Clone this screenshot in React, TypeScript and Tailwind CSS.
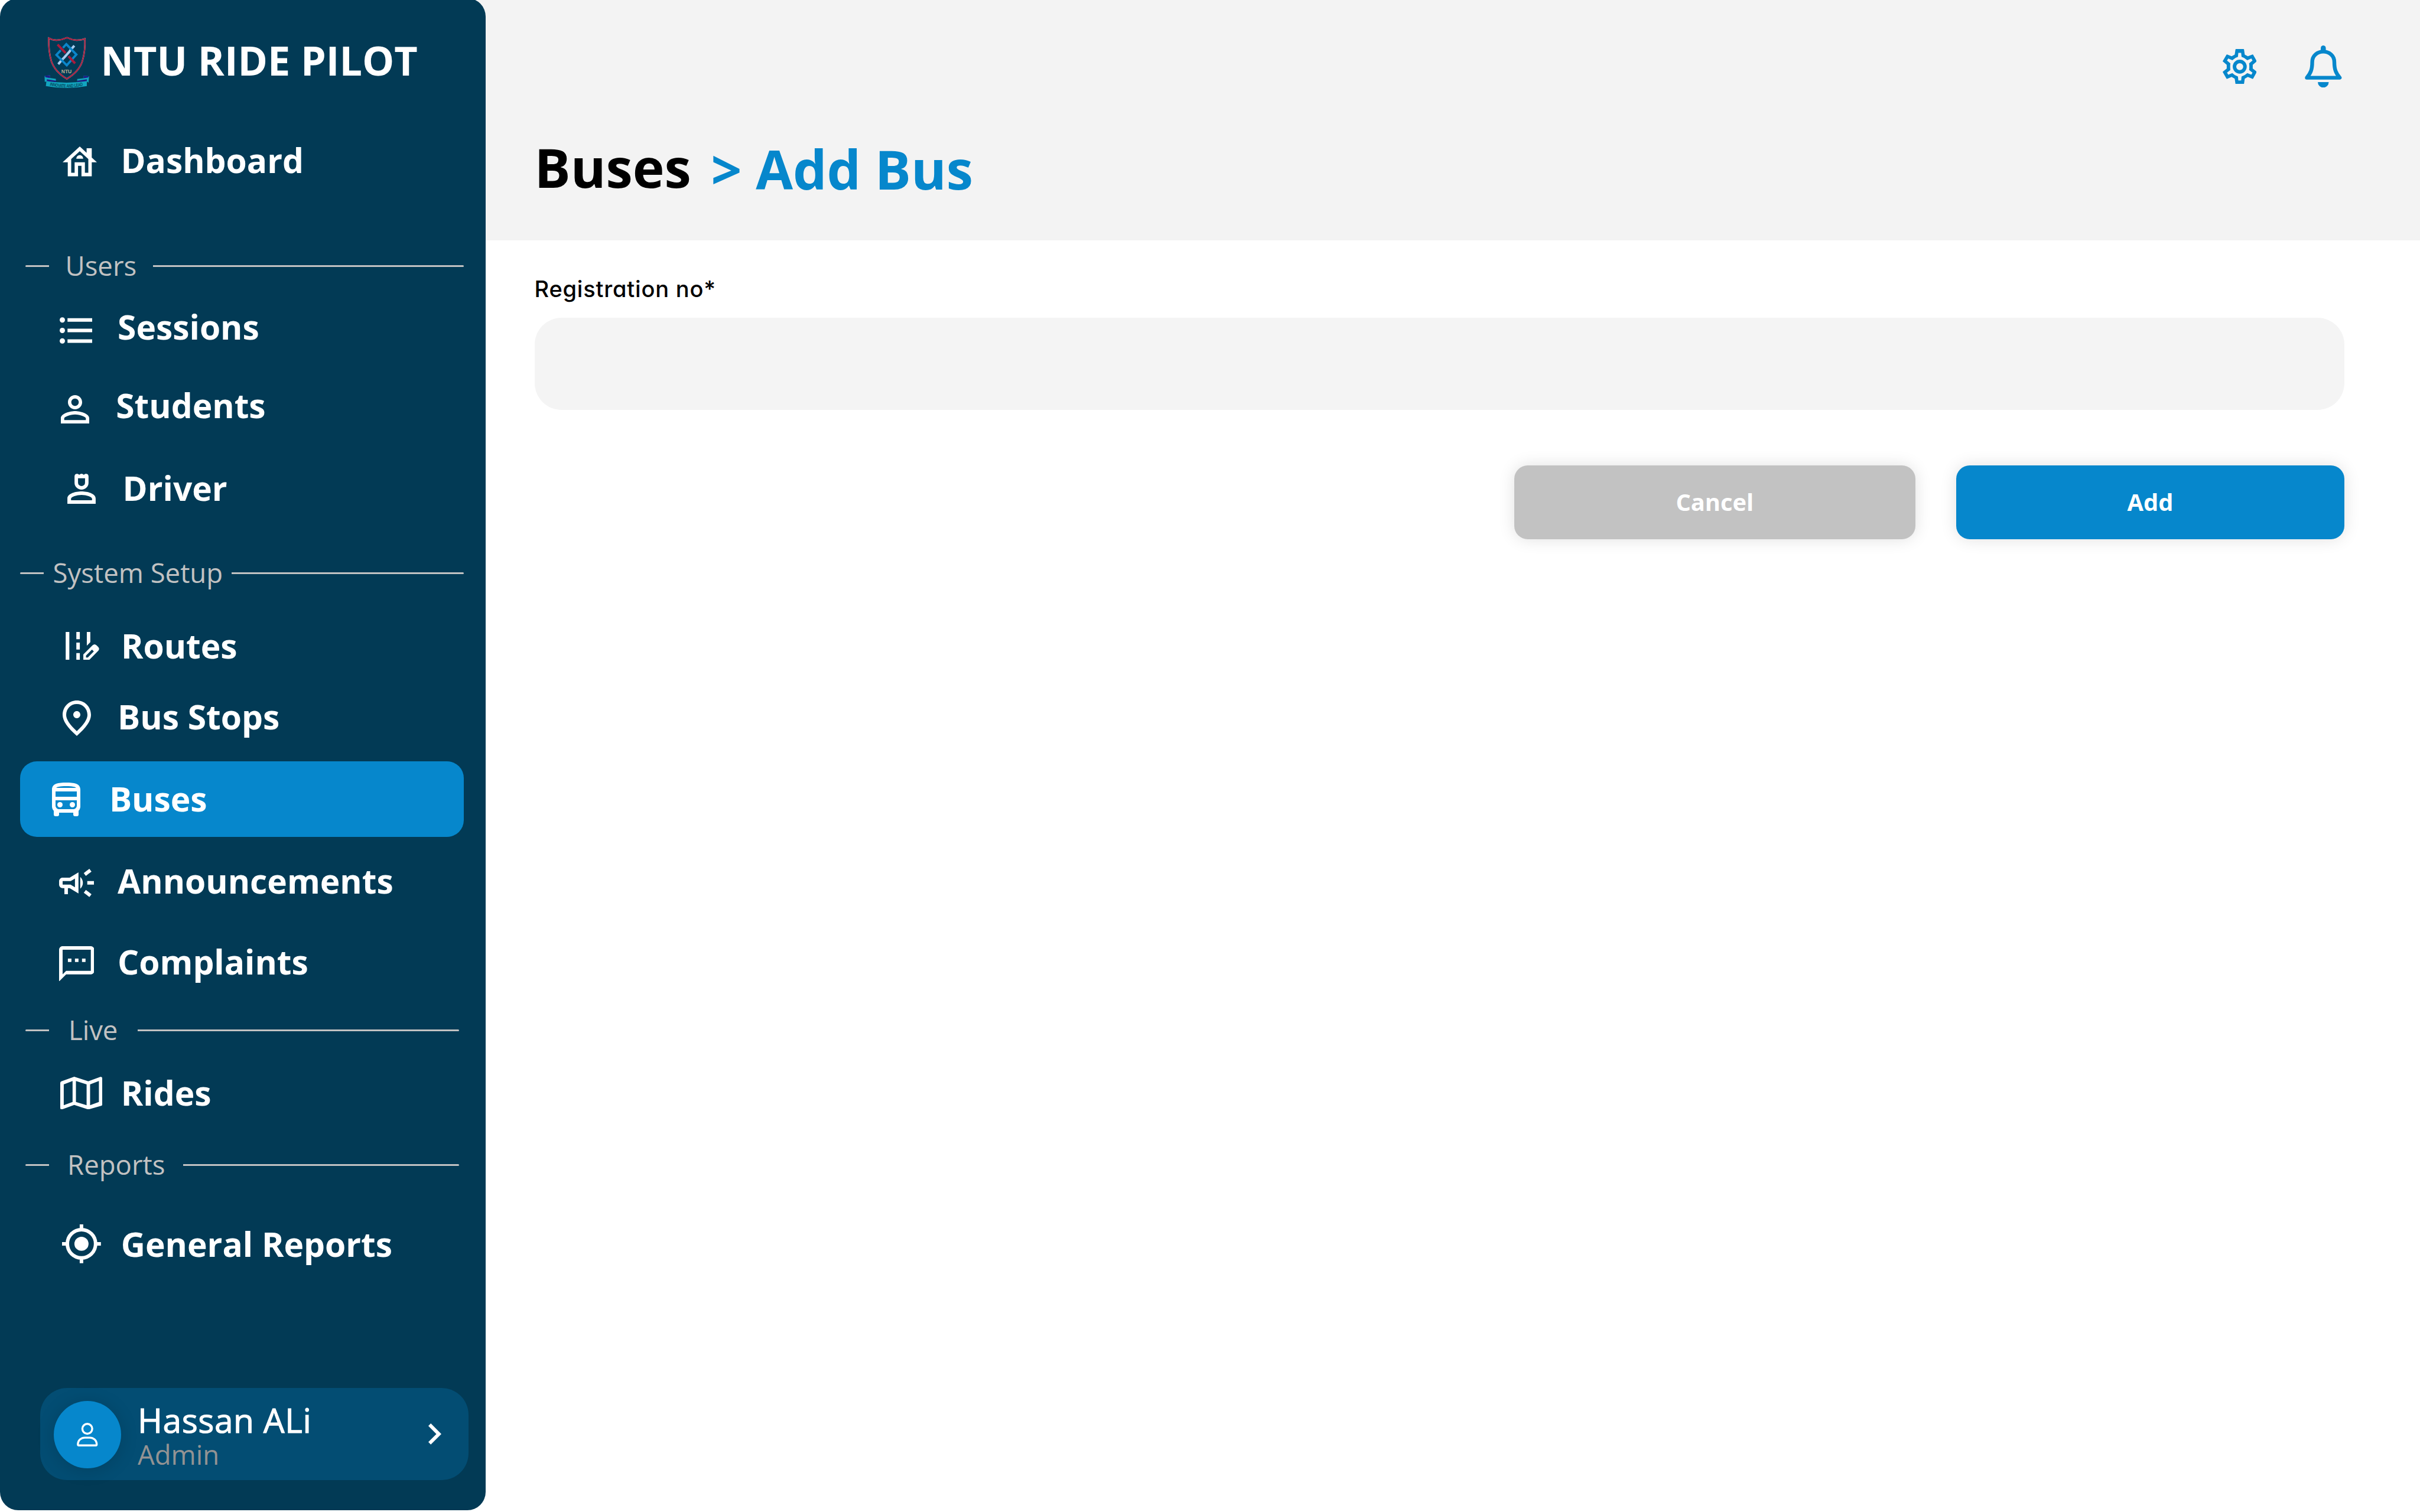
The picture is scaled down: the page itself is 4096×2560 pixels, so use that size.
import type { ReactNode } from "react";

type IconProps = { className: string };

function HouseIcon({ className }: IconProps) {
  return (
    <svg viewBox="2 3 20 17" preserveAspectRatio="none" fill="currentColor" className={className}>
      <path d="M19 9.3V4h-3v2.6L12 3 2 12h3v8h6v-6h2v6h6v-8h3l-3-2.7zM17 18h-2v-6H9v6H7v-7.81l5-4.5 5 4.5V18zM10 10h4c0-1.1-.9-2-2-2s-2 .9-2 2z" />
    </svg>
  );
}

function ListIcon({ className }: IconProps) {
  return (
    <svg viewBox="127 43 233 190" fill="currentColor" className={className}>
      <circle cx="146" cy="63" r="19" />
      <circle cx="146" cy="138" r="19" />
      <circle cx="146" cy="213" r="19" />
      <path d="M183 50h177v26H183zM183 125h177v26H183zM183 201h177v26H183z" />
    </svg>
  );
}

function PersonIcon({ className }: IconProps) {
  return (
    <svg viewBox="4 4 16 16" fill="currentColor" className={className}>
      <path d="M12 5.9c1.16 0 2.1.94 2.1 2.1s-.94 2.1-2.1 2.1S9.9 9.16 9.9 8s.94-2.1 2.1-2.1m0 9c2.97 0 6.1 1.46 6.1 2.1v1.1H5.9V17c0-.64 3.13-2.1 6.1-2.1M12 4C9.79 4 8 5.79 8 8s1.79 4 4 4 4-1.79 4-4-1.79-4-4-4zm0 9c-2.67 0-8 1.34-8 4v3h16v-3c0-2.66-5.33-4-8-4z" />
    </svg>
  );
}

function DriverIcon({ className }: IconProps) {
  return (
    <svg viewBox="181 1163 202 217" fill="currentColor" fillRule="evenodd" className={className}>
      <path d="M232 1182C232 1164 252 1158 266 1171C274 1162 290 1162 298 1171C312 1158 332 1164 332 1182V1227a50 50 0 0 1-100 0ZM257 1196V1227a25 25 0 0 0 50 0V1196Z" />
      <path d="M181 1380V1341C181 1305 240 1290 282 1290S383 1305 383 1341V1380ZM207 1353H357V1341C357 1330 317 1315 282 1315S207 1330 207 1341Z" />
    </svg>
  );
}

function RoadIcon({ className }: IconProps) {
  return (
    <svg viewBox="169 43 239 201" fill="currentColor" fillRule="evenodd" className={className}>
      <path d="M169 43h26v201h-26zM245 43h25v52h-25zM245 119h25v50h-25zM245 194h25v50h-25zM320 43h25v73l-25 25z" />
      <path d="M295 244V203L361 138Q375 125 389 138L401 150Q414 164 402 177L336 244ZM314 226H327L370 182L357 169L314 212Z" />
    </svg>
  );
}

function PinIcon({ className }: IconProps) {
  return (
    <svg viewBox="4 2 16 20" fill="currentColor" className={className}>
      <path d="M12 12c-1.1 0-2-.9-2-2s.9-2 2-2 2 .9 2 2-.9 2-2 2zm6-1.8C18 6.57 15.35 4 12 4s-6 2.57-6 6.2c0 2.34 1.95 5.44 6 9.14 4.05-3.7 6-6.8 6-9.14zM12 2c4.2 0 8 3.22 8 8.2 0 3.32-2.67 7.25-8 11.8-5.33-4.55-8-8.48-8-11.8C4 5.22 7.8 2 12 2z" />
    </svg>
  );
}

function BusIcon({ className }: IconProps) {
  return (
    <svg viewBox="4 2 16 19" fill="currentColor" fillRule="evenodd" className={className}>
      <path d="M4 15.5c0 .95.38 1.81 1 2.44V20a1 1 0 0 0 1 1h1a1 1 0 0 0 1-1v-1h8v1a1 1 0 0 0 1 1h1a1 1 0 0 0 1-1v-2.06c.62-.63 1-1.49 1-2.44V6c0-3.5-3.58-4-8-4s-8 .5-8 4v9.5zM12 4c3.69 0 5.11.46 5.66.99H6.34C6.89 4.46 8.31 4 12 4zM6 7.03h12V10H6zM6 12h12v3c0 1.1-.9 2-2 2H8c-1.1 0-2-.9-2-2z" />
      <circle cx="8.5" cy="14.5" r="1.5" />
      <circle cx="15.5" cy="14.5" r="1.5" />
    </svg>
  );
}

function CampaignIcon({ className }: IconProps) {
  return (
    <svg viewBox="2 4 20 16" fill="currentColor" className={className}>
      <path d="M18 11v2h4v-2h-4zM16 17.61c.96.71 2.21 1.65 3.2 2.39.4-.53.8-1.07 1.2-1.6-.99-.74-2.24-1.68-3.2-2.4-.4.54-.8 1.08-1.2 1.61zM20.4 5.6c-.4-.53-.8-1.07-1.2-1.6-.99.74-2.24 1.68-3.2 2.4.4.53.8 1.07 1.2 1.6.96-.72 2.21-1.65 3.2-2.4zM4 9c-1.1 0-2 .9-2 2v2c0 1.1.9 2 2 2h1v3.4h2V15h1l5 3V6L8 9H4zm5.03 1.71L11 9.53v4.94l-1.97-1.18-.48-.29H4v-2h4.55l.48-.29zM15.5 12c0-1.33-.58-2.53-1.5-3.35v6.69c.92-.81 1.5-2.01 1.5-3.34z" />
    </svg>
  );
}

function ChatIcon({ className }: IconProps) {
  return (
    <svg viewBox="2 2 20 20" fill="currentColor" className={className}>
      <path d="M20 2H4c-1.1 0-2 .9-2 2v18l4-4h14c1.1 0 2-.9 2-2V4c0-1.1-.9-2-2-2zm0 14H6l-2 2V4h16v12zM7 9h2v2H7zm8 0h2v2h-2zm-4 0h2v2h-2z" />
    </svg>
  );
}

function MapIcon({ className }: IconProps) {
  return (
    <svg viewBox="0 0 100 78" fill="currentColor" fillRule="evenodd" className={className}>
      <path d="M3 11L33.3 0L66.7 10.7L95.5 .3Q100 -.5 100 4V66Q100 68.5 97.5 69.3L66.7 78L33.3 67L4.5 77.7Q0 78.500 0 74V15Q0 12 3 11ZM8.300 18.200V67.800L29.300 60.200V10ZM37.300 10V60.200L62.700 67.800V18.200ZM71 18.200V67.800L92 60.200V10Z" />
    </svg>
  );
}

function TargetIcon({ className }: IconProps) {
  return (
    <svg viewBox="0 0 22 22" fill="currentColor" className={className}>
      <circle cx="11" cy="11" r="8" fill="none" stroke="currentColor" strokeWidth="2" />
      <circle cx="11" cy="11" r="4" />
      <path d="M10 0h2v3h-2zM10 19h2v3h-2zM0 10h3v2H0zM19 10h3v2h-3z" />
    </svg>
  );
}

function GearIcon({ className }: IconProps) {
  return (
    <svg viewBox="268 168 244 252" fill="currentColor" fillRule="evenodd" className={className}>
      <path d="M363 168H417Q420 168 420.500 171L426 208L448 220L481 207Q484 206 486 209L511 253Q513 256 510 258L483 281V307L510 329Q513 331 511 334L486 379Q484 382 481 381L448 367L426 380L420.500 417Q420 420 417 420H363Q360 420 359.500 417L354 380L332 367L300 381Q297 382 295 379L269 334Q267 331 270 329L297 307V281L270 258Q267 256 269 253L295 209Q297 206 300 207L332 220L354 208L359.500 171Q360 168 363 168ZM380 195L377 224Q355 230 337 248L308 236L299 250L323 270Q320 294 323 318L299 337L308 352L337 340Q355 358 377 364L380 393H400L403 364Q425 358 444 340L473 352L481 337L457 318Q460 294 457 270L481 250L473 236L444 248Q425 230 403 224L400 195Z" />
      <circle cx="390" cy="294" r="37.500" fill="none" stroke="currentColor" strokeWidth="25" />
    </svg>
  );
}

function BellIcon({ className }: IconProps) {
  return (
    <svg viewBox="858 143 264 301" fill="currentColor" className={className}>
      <rect x="972" y="143" width="36" height="48" rx="18" />
      <path
        d="M872.500 373.500C900 340 911 315 911 262C911 215 948 187 990 187S1069 215 1069 262C1069 315 1080 340 1107.500 373.500Z"
        fill="none"
        stroke="currentColor"
        strokeWidth="27"
        strokeLinejoin="round"
      />
      <path d="M951 405h78a39 39 0 0 1-78 0z" />
    </svg>
  );
}

function CrestLogo({ className }: IconProps) {
  return (
    <svg viewBox="75 50 322 372" className={className}>
      <path
        d="M107 60Q135 76 165 75Q205 72 238 57Q270 72 305 75Q340 76 366 65Q370 150 348 225Q325 300 236 353Q150 300 125 225Q104 150 107 60Z"
        fill="none"
        stroke="#d7b9c4"
        strokeWidth="10"
      />
      <path
        d="M107 60Q135 76 165 75Q205 72 238 57Q270 72 305 75Q340 76 366 65Q370 150 348 225Q325 300 236 353Q150 300 125 225Q104 150 107 60Z"
        fill="none"
        stroke="#a81c3c"
        strokeWidth="8.500"
      />
      <path d="M175 247L290 115" stroke="#a9cdf0" strokeWidth="17" strokeLinecap="butt" />
      <path d="M233 104L305 178L236 255L162 181Z" fill="none" stroke="#0b86cb" strokeWidth="16" />
      <path d="M170 106L228 168" stroke="#023a55" strokeWidth="24" />
      <path d="M170 106L228 168M248 190L296 242" stroke="#a81c3c" strokeWidth="17" />
      <path d="M212 206L258 154" stroke="#023a55" strokeWidth="24" />
      <path d="M212 206L260 152" stroke="#a9cdf0" strokeWidth="17" />
      <text x="234" y="313" textAnchor="middle" fontSize="42" fontWeight="700" fill="#b9b194" textLength="74" lengthAdjust="spacingAndGlyphs" fontFamily="Liberation Sans, sans-serif">
        NTU
      </text>
      <path d="M77 331L116 326V346L158 352V372L93 372L78 374ZM396 333L357 330V348L311 354V374L380 372L392 380Z" fill="#12a5bf" />
      <path d="M77 331L116 326V347L84 341ZM396 333L357 330V348L388 343ZM93 356L160 366V375L93 370ZM380 356L311 366V375L380 370Z" fill="#1f1a86" />
      <path d="M90 368Q236 392 380 368V404Q236 432 86 404Z" fill="#12a5bf" />
      <path id="motto" d="M114 400Q236 428 358 400" fill="none" />
      <text fontSize="32" fill="#06465c" stroke="#06465c" strokeWidth="1.2" fontFamily="Liberation Sans, sans-serif">
        <textPath href="#motto" textLength="240" lengthAdjust="spacingAndGlyphs">
          INNOVATE AND LEAD
        </textPath>
      </text>
    </svg>
  );
}

function NavItem({ row, icon, label }: { row: string; icon: ReactNode; label: string }) {
  return (
    <a className={"flex h-[68px] shrink-0 items-start text-[56.89px] leading-[68px] font-bold whitespace-nowrap text-white " + row}>
      {icon}
      <span>{label}</span>
    </a>
  );
}

function SectionHeading({ row, dash, text, label }: { row: string; dash: string; text: string; label: string }) {
  return (
    <div className={"flex h-[68px] shrink-0 items-center text-[45.51px] leading-[68px] whitespace-nowrap text-[#c2c2c2] " + row}>
      <span className={"mt-[3px] h-[3px] shrink-0 rounded-l-full bg-[#c2c2c2] " + dash} />
      <span className={"-mt-px shrink-0 pl-px " + text}>{label}</span>
      <span className="mt-[3px] h-[3px] flex-1 rounded-r-full bg-[#c2c2c2]" />
    </div>
  );
}

function Sidebar() {
  return (
    <aside className="relative z-10 -mt-[3px] flex h-[2560px] w-[822px] shrink-0 flex-col rounded-[31px] bg-[#023a55]">
      <div className="mt-[65px] flex h-[88px] shrink-0 items-start pl-[75px]">
        <CrestLogo className="h-[88px] w-[76px] shrink-0" />
        <span className="-mt-[4px] ml-[19.5px] text-[68.27px] leading-[88px] font-bold whitespace-nowrap text-white">NTU RIDE PILOT</span>
      </div>

      <nav className="mt-[87px] flex flex-col">
        <NavItem row="gap-[40.5px] pl-[106px]" icon={<HouseIcon className="mt-[11px] h-[50.5px] w-[58px] shrink-0" />} label="Dashboard" />

        <SectionHeading row="mt-[110px] pr-[37px] pl-[42.5px]" dash="w-[40px]" text="ml-[27px] w-[149.5px]" label="Users" />
        <NavItem row="mt-[35.5px] gap-[42.7px] pl-[101.2px]" icon={<ListIcon className="mt-[18px] h-[45px] w-[55.200px] shrink-0" />} label="Sessions" />
        <NavItem row="mt-[65px] gap-[45.7px] pl-[102.6px]" icon={<PersonIcon className="mt-[17px] size-[48px] shrink-0" />} label="Students" />
        <NavItem row="mt-[72px] gap-[45.8px] pl-[113.8px]" icon={<DriverIcon className="mt-[10.4px] h-[51.4px] w-[48px] shrink-0" />} label="Driver" />

        <SectionHeading row="mt-[75.5px] pr-[37px] pl-[34px]" dash="w-[40px]" text="ml-[14.5px] w-[303.9px]" label="System Setup" />
        <NavItem row="mt-[56px] gap-[36.9px] pl-[111px]" icon={<RoadIcon className="mt-[10.7px] h-[47.6px] w-[57px] shrink-0" />} label="Routes" />
        <NavItem row="mt-[51.5px] gap-[45.6px] pl-[105.5px]" icon={<PinIcon className="mt-[7.3px] h-[60px] w-[48px] shrink-0" />} label="Bus Stops" />
        <a className="mt-[42px] mr-[37px] ml-[34px] flex h-[128px] shrink-0 items-start gap-[48.7px] rounded-[28.4px] bg-[#0687cc] pl-[54.2px] text-[56.89px] leading-[126px] font-bold text-white">
          <BusIcon className="mt-[36.8px] h-[57px] w-[48px] shrink-0" />
          <span>Buses</span>
        </a>
        <NavItem row="mt-[40.5px] gap-[39.8px] pl-[99.6px]" icon={<CampaignIcon className="mt-[14px] h-[47.7px] w-[59.7px] shrink-0" />} label="Announcements" />
        <NavItem row="mt-[68.5px] gap-[39.8px] pl-[99.6px]" icon={<ChatIcon className="mt-[8px] h-[59.7px] w-[59.7px] shrink-0" />} label="Complaints" />

        <SectionHeading row="mt-[47.5px] pr-[45.5px] pl-[42.5px]" dash="w-[40px]" text="ml-[32.4px] w-[118.6px]" label="Live" />
        <NavItem row="mt-[38.5px] gap-[31.3px] pl-[102.4px]" icon={<MapIcon className="mt-[7px] h-[55.5px] w-[71.1px] shrink-0" />} label="Rides" />

        <SectionHeading row="mt-[53.5px] pr-[45.5px] pl-[42.5px]" dash="w-[40px]" text="ml-[30.6px] w-[197.1px]" label="Reports" />
        <NavItem row="mt-[66.5px] gap-[34px] pl-[105px]" icon={<TargetIcon className="mt-[1.5px] size-[65.8px] shrink-0" />} label="General Reports" />
      </nav>

      <div className="mt-auto mr-[29px] mb-[51px] ml-[68px] flex h-[156.4px] shrink-0 items-center rounded-[45.5px] bg-[#034d73] pl-[23px] pr-[46px]">
        <div className="mt-[2px] flex size-[114px] shrink-0 items-center justify-center rounded-full bg-[#0687cc] shadow-[0_3px_30px_rgba(0,0,0,0.15)]">
          <svg viewBox="0 0 50 56.500" className="h-[40px] w-[35.500px]" fill="none" stroke="#fff" strokeWidth="4.800" strokeLinejoin="round">
            <circle cx="25" cy="14.300" r="11.800" />
            <path d="M2.500 52C2.500 41 11 35.500 19 35.500H31C39 35.500 47.500 41 47.500 52Q47.500 54 45.500 54H4.500Q2.500 54 2.500 52Z" />
          </svg>
        </div>
        <div className="mt-[3px] ml-[28px] flex flex-col whitespace-nowrap">
          <span className="text-[56.89px] leading-[66px] tracking-[0.55px] text-white [-webkit-text-stroke:1px_#fff]">Hassan ALi</span>
          <span className="text-[45.51px] leading-[50px] text-[#939393]">Admin</span>
        </div>
        <svg viewBox="8.59 6 7.41 12" fill="#fff" className="ml-auto h-[35.800px] w-[22px]">
          <path d="M10 6 8.590 7.410 13.170 12l-4.580 4.590L10 18l6-6z" />
        </svg>
      </div>
    </aside>
  );
}

export default function App() {
  return (
    <div className="flex h-[2560px] w-[4096px] overflow-hidden bg-white font-['Open_Sans',sans-serif]">
      <Sidebar />
      <main className="-ml-[32px] flex flex-1 flex-col">
        <header className="flex h-[407px] shrink-0 flex-col bg-[#f3f3f3] pr-[132px] pl-[114.5px]">
          <div className="flex h-[148px] shrink-0 items-end justify-end gap-[82px] text-[#0687cc]">
            <GearIcon className="mb-[5.8px] h-[59.7px] w-[57.8px]" />
            <BellIcon className="h-[71.3px] w-[62.6px]" />
          </div>
          <h1 className="mt-[75px] flex text-[91.02px] leading-[120px] font-bold whitespace-nowrap text-black">
            <span className="w-[299px]">Buses</span>
            <span className="mt-[3px] text-[#0687cc]">&gt; Add Bus</span>
          </h1>
        </header>
        <form className="flex flex-col pr-[128px] pl-[114.5px]">
          <label className="mt-[58px] text-[38px] leading-[48px] font-medium tracking-[0.8px] whitespace-nowrap text-black [font-feature-settings:'cv11'] font-[Inter,sans-serif]">Registration no*</label>
          <input className="mt-[24.5px] h-[156.4px] w-full rounded-[45.5px] bg-[#f4f4f4] px-10 text-[40px] outline-none" />
          <div className="mt-[94px] flex justify-end gap-[69px] text-[39.82px] leading-[123px] font-bold text-white">
            <button type="button" className="h-[125px] w-[679.5px] rounded-[22.8px] bg-[#c2c2c2] pb-[2px] shadow-[0_0_28px_rgba(0,0,0,0.12)]">Cancel</button>
            <button type="button" className="h-[125px] w-[657px] rounded-[22.8px] bg-[#0687cc] pb-[2px] shadow-[0_0_28px_rgba(0,0,0,0.12)]">Add</button>
          </div>
        </form>
      </main>
    </div>
  );
}
